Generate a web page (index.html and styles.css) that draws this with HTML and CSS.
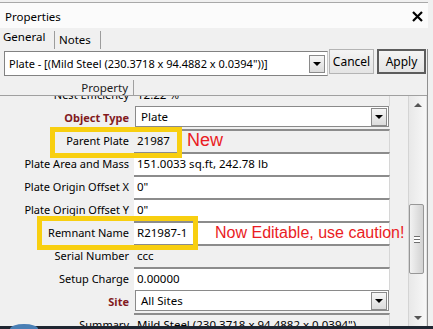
FILE: index.html
```html
<!DOCTYPE html>
<html lang="en">
<head>
    <meta charset="UTF-8">
    <title>Properties</title>
    <link rel="stylesheet" href="styles.css">
</head>
<body>
    <div class="window">
        <div class="titlebar">
            <span>Properties</span>
            <svg class="close" width="11" height="11" viewBox="0 0 11 11">
                <path d="M1 1 L10 10 M10 1 L1 10" stroke="#000" stroke-width="2.2" fill="none"/>
            </svg>
        </div>
        <div class="tabs">
            <div class="tab tab-active">General</div>
            <div class="tab tab-notes">Notes</div>
        </div>
        <div class="panel">
            <div class="toolbar">
                <div class="combo combo-main">
                    <span class="combo-text">Plate - [(Mild Steel (230.3718 x 94.4882 x 0.0394"))]</span>
                    <div class="drop"><span class="arrow-down"></span></div>
                </div>
                <button class="btn btn-cancel">Cancel</button>
                <button class="btn btn-apply">Apply</button>
            </div>
            <div class="grid-head">
                <div class="head-label">Property</div>
            </div>
            <div class="grid-body">
                <div class="list">
                    <div class="row row-first">
                        <div class="label">Nest Efficiency</div>
                        <div class="value readonly">12.22 %</div>
                    </div>
                    <div class="row">
                        <div class="label label-key">Object Type</div>
                        <div class="value value-combo">
                            <span>Plate</span>
                            <div class="drop"><span class="arrow-down"></span></div>
                        </div>
                    </div>
                    <div class="row">
                        <div class="label">Parent Plate</div>
                        <div class="value readonly">21987</div>
                    </div>
                    <div class="row">
                        <div class="label">Plate Area and Mass</div>
                        <div class="value">151.0033 sq.ft, 242.78 lb</div>
                    </div>
                    <div class="row">
                        <div class="label">Plate Origin Offset X</div>
                        <div class="value">0"</div>
                    </div>
                    <div class="row">
                        <div class="label">Plate Origin Offset Y</div>
                        <div class="value">0"</div>
                    </div>
                    <div class="row">
                        <div class="label">Remnant Name</div>
                        <div class="value">R21987-1</div>
                    </div>
                    <div class="row">
                        <div class="label">Serial Number</div>
                        <div class="value readonly">ccc</div>
                    </div>
                    <div class="row">
                        <div class="label">Setup Charge</div>
                        <div class="value">0.00000</div>
                    </div>
                    <div class="row">
                        <div class="label label-key">Site</div>
                        <div class="value value-combo">
                            <span>All Sites</span>
                            <div class="drop"><span class="arrow-down"></span></div>
                        </div>
                    </div>
                    <div class="row">
                        <div class="label">Summary</div>
                        <div class="value readonly">Mild Steel (230.3718 x 94.4882 x 0.0394")</div>
                    </div>
                </div>
                <div class="scrollbar">
                    <div class="scroll-btn"><span class="arrow-up"></span></div>
                    <div class="scroll-track">
                        <div class="thumb">
                            <span class="grip"></span>
                        </div>
                    </div>
                    <div class="scroll-btn"><span class="arrow-down arrow-gray"></span></div>
                </div>
            </div>
        </div>
    </div>
    <div class="taskbar"><span class="orb"></span></div>

    <!-- marcações da captura -->
    <div class="highlight hl-parent"></div>
    <div class="highlight hl-remnant"></div>
    <div class="callout callout-new">New</div>
    <div class="callout callout-edit">Now Editable, use caution!</div>
</body>
</html>
```

FILE: styles.css
```css
* {
    box-sizing: border-box;
}

body {
    margin: 0;
    width: 433px;
    height: 329px;
    overflow: hidden;
    position: relative;
    background-color: #f0f0f0;
    font-family: "Segoe UI", "Noto Sans", sans-serif;
    font-size: 11px;
    color: #000;
}

.window {
    width: 428px;
    padding-top: 2px;
}

.titlebar {
    height: 26px;
    border-top: 1px solid #a8a8a8;
    background-color: #fbfbfb;
    display: flex;
    align-items: center;
    justify-content: space-between;
    padding: 2px 5px 0 5px;
    font-size: 11.5px;
}

.tabs {
    height: 21px;
    display: flex;
    font-size: 11.5px;
}

.tab {
    line-height: 18px;
}

.tab-active {
    width: 54px;
    padding-left: 3px;
}

.tab-notes {
    width: 47px;
    margin-top: 3px;
    padding-left: 4px;
    border-left: 1px solid #9c9c9c;
    border-right: 1px solid #9c9c9c;
}

.panel {
    border-right: 1px solid #8f8f8f;
}

.toolbar {
    height: 31px;
    display: flex;
    align-items: flex-start;
    padding-left: 4px;
}

.combo {
    display: flex;
    align-items: center;
    justify-content: space-between;
    background-color: #fff;
}

.combo-main {
    width: 324px;
    height: 25px;
    margin-top: 2px;
    border: 1px solid #828282;
    border-right-color: #c8c8c8;
    padding: 0 2px 0 4px;
}

.drop {
    width: 16px;
    height: 18px;
    border: 1px solid #8a8a8a;
    background: linear-gradient(#f6f6f6, #dcdcdc);
    display: flex;
    align-items: center;
    justify-content: center;
}

.arrow-down {
    width: 0;
    height: 0;
    border-left: 4px solid transparent;
    border-right: 4px solid transparent;
    border-top: 4px solid #000;
}

.arrow-up {
    width: 0;
    height: 0;
    border-left: 4px solid transparent;
    border-right: 4px solid transparent;
    border-bottom: 4px solid #555;
}

.arrow-gray {
    border-top-color: #555;
}

.btn {
    height: 25px;
    font-family: inherit;
    font-size: 12px;
    color: #000;
    padding: 0;
    background: linear-gradient(#f4f4f4, #e4e4e4);
    cursor: pointer;
}

.btn-cancel {
    width: 45px;
    margin-left: 1px;
    border: 1px solid #b4b4b4;
}

.btn-apply {
    width: 49px;
    margin-left: 3px;
    border: 2px solid #5c5c5c;
}

.grid-head {
    height: 16px;
    border-bottom: 1px solid #a0a0a0;
    display: flex;
}

.head-label {
    width: 134px;
    border-right: 1px solid #a0a0a0;
    text-align: right;
    padding-right: 5px;
    font-size: 11.5px;
    line-height: 15px;
    color: #222;
}

.grid-body {
    height: 230px;
    display: flex;
    overflow: hidden;
}

.list {
    width: 408px;
}

.row {
    display: flex;
    height: 23px;
}

.row-first {
    margin-top: -13px;
}

.label {
    width: 134px;
    text-align: right;
    padding-right: 5px;
    line-height: 24px;
    white-space: nowrap;
}

.label-key {
    font-weight: bold;
    color: #821a1e;
}

.value {
    width: 256px;
    border-top: 2px solid #8c8c8c;
    border-right: 1px solid #d6d6d6;
    background-color: #fff;
    padding-left: 3px;
    line-height: 20px;
    font-size: 11.5px;
    white-space: nowrap;
    overflow: hidden;
}

.value.readonly {
    background-color: #f0f0f0;
}

.value-combo {
    display: flex;
    align-items: center;
    justify-content: space-between;
    border: 1px solid #8a8a8a;
    margin: 0 1px 2px 1px;
    width: 254px;
    padding: 0 1px 0 5px;
}

.scrollbar {
    width: 19px;
    display: flex;
    flex-direction: column;
    border-left: 1px solid #d4d4d4;
    border-right: 1px solid #e2e2e2;
    background: linear-gradient(90deg, #e8e8e8, #f7f7f7);
}

.scroll-btn {
    height: 17px;
    display: flex;
    align-items: center;
    justify-content: center;
}

.scroll-track {
    flex: 1;
    padding-top: 91px;
}

.thumb {
    width: 15px;
    height: 70px;
    border: 1px solid #979797;
    border-radius: 2px;
    background: linear-gradient(90deg, #f2f2f2, #e2e2e2 50%, #d2d2d2);
    display: flex;
    align-items: center;
    justify-content: center;
}

.grip {
    width: 6px;
    height: 7px;
    border-top: 1px solid #6f6f6f;
    border-bottom: 1px solid #6f6f6f;
    background: linear-gradient(#fff 0, #fff 2px, #6f6f6f 2px, #6f6f6f 3px, #fff 3px);
}

.taskbar {
    height: 3px;
    background-color: #1f2631;
    position: relative;
}

.orb {
    position: absolute;
    left: 10px;
    top: -2px;
    width: 28px;
    height: 10px;
    border-radius: 50%;
    background-color: #4a7fb5;
}

.highlight {
    position: absolute;
    border: 5px solid #f8cf10;
}

.hl-parent {
    left: 50px;
    top: 127px;
    width: 132px;
    height: 31px;
}

.hl-remnant {
    left: 37px;
    top: 216px;
    width: 161px;
    height: 34px;
}

.callout {
    position: absolute;
    font-family: "Liberation Sans", Arial, sans-serif;
    line-height: 17px;
    color: #ea1c24;
    white-space: nowrap;
}

.callout-new {
    left: 187px;
    top: 132px;
    font-size: 18px;
}

.callout-edit {
    left: 215px;
    top: 224px;
    font-size: 16px;
}
```
